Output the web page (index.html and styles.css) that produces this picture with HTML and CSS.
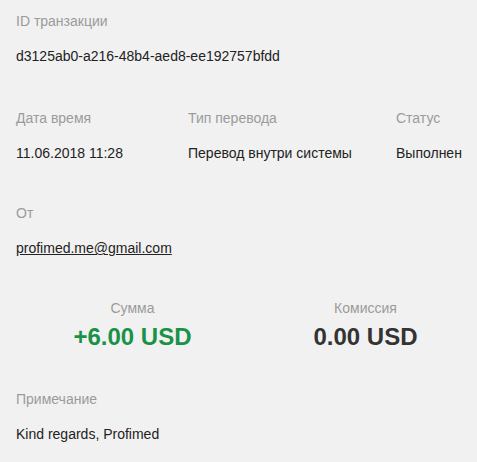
FILE: index.html
```html
<!DOCTYPE html>
<html>
<head>
  <title>Транзакция</title>
  <link rel="stylesheet" href="styles.css">
</head>
<body>
  <div class="details">
    <div class="section first">
      <div class="label">ID транзакции</div>
      <div class="value">d3125ab0-a216-48b4-aed8-ee192757bfdd</div>
    </div>

    <div class="section row">
      <div class="col col-date">
        <div class="label">Дата время</div>
        <div class="value">11.06.2018 11:28</div>
      </div>
      <div class="col col-type">
        <div class="label">Тип перевода</div>
        <div class="value">Перевод внутри системы</div>
      </div>
      <div class="col">
        <div class="label">Статус</div>
        <div class="value">Выполнен</div>
      </div>
    </div>

    <div class="section">
      <div class="label">От</div>
      <div class="value"><a href="#">profimed.me@gmail.com</a></div>
    </div>

    <div class="section amounts">
      <div class="amount">
        <div class="label">Сумма</div>
        <div class="sum plus">+6.00 USD</div>
      </div>
      <div class="amount">
        <div class="label">Комиссия</div>
        <div class="sum">0.00 USD</div>
      </div>
    </div>

    <div class="section">
      <div class="label">Примечание</div>
      <div class="value">Kind regards, Profimed</div>
    </div>
  </div>
</body>
</html>
```

FILE: styles.css
```css
body {
  margin: 0;
  padding: 0;
  background: #f1f1f1;
  font-family: "Liberation Sans", Arial, sans-serif;
  font-size: 14px;
  line-height: 16px;
  color: #222;
}

.details {
  padding: 13px 0 0 16px;
}

.section {
  margin-bottom: 44px;
}

.section.first {
  margin-bottom: 46px;
}

.section:last-child {
  margin-bottom: 0;
}

.label {
  color: #9b9b9b;
  margin-bottom: 19px;
}

.value a {
  color: #222;
  text-decoration: underline;
}

.row {
  display: flex;
}

.col-date {
  width: 172px;
}

.col-type {
  width: 208px;
}

.amounts {
  display: grid;
  grid-template-columns: 233px 233px;
  text-align: center;
  margin-bottom: 40px;
}

.amounts .label {
  margin-bottom: 7px;
}

.sum {
  font-size: 24px;
  line-height: 28px;
  font-weight: bold;
  color: #333;
}

.sum.plus {
  color: #1b9148;
}
```
